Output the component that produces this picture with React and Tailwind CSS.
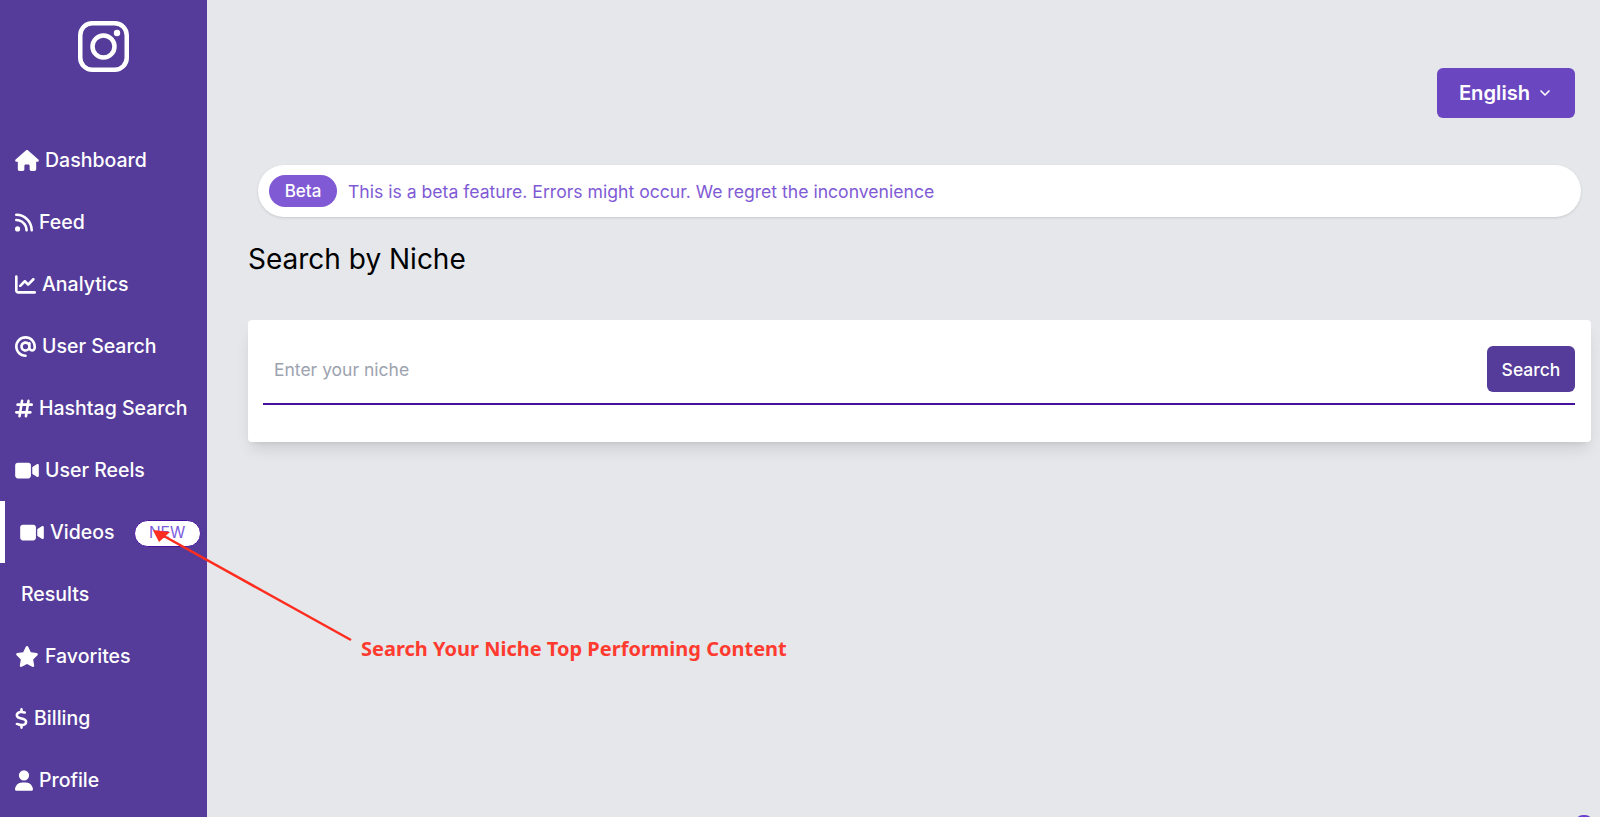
import React from "react";
import { ChevronDown } from "lucide-react";
import {
  FaHouse,
  FaRss,
  FaChartLine,
  FaAt,
  FaHashtag,
  FaVideo,
  FaStar,
  FaDollarSign,
  FaUser,
} from "react-icons/fa6";

const navItems = [
  { label: "Dashboard", icon: FaHouse, iconSize: "w-[24px]" },
  { label: "Feed", icon: FaRss, iconSize: "w-[18px]" },
  { label: "Analytics", icon: FaChartLine, iconSize: "w-[21px]" },
  { label: "User Search", icon: FaAt, iconSize: "w-[21px]" },
  { label: "Hashtag Search", icon: FaHashtag, iconSize: "w-[18px]" },
  { label: "User Reels", icon: FaVideo, iconSize: "w-[24px]" },
  { label: "Videos", icon: FaVideo, iconSize: "w-[24px]", active: true, badge: "NEW" },
  { label: "Results", plain: true },
  { label: "Favorites", icon: FaStar, iconSize: "w-[24px]" },
  { label: "Billing", icon: FaDollarSign, iconSize: "w-[13px]" },
  { label: "Profile", icon: FaUser, iconSize: "w-[18px]" },
];

function InstagramLogo() {
  return (
    <svg width="51" height="51" viewBox="0 0 51 51" fill="none" stroke="white" strokeWidth="4.5">
      <rect x="2.25" y="2.25" width="46.5" height="46.5" rx="12" />
      <circle cx="25.5" cy="25.5" r="11" />
      <circle cx="39" cy="12" r="3.2" fill="white" stroke="none" />
    </svg>
  );
}

function Sidebar() {
  return (
    <aside className="w-[207px] shrink-0 bg-[#553c9a] text-white">
      <div className="flex h-[129px] justify-center pt-[21px]">
        <div className="h-[51px]">
          <InstagramLogo />
        </div>
      </div>
      <nav>
        {navItems.map((item) => {
          const Icon = item.icon;
          return (
            <div
              key={item.label}
              className={`flex h-[62px] items-center pt-[2px] text-[19.5px] font-medium ${
                item.active ? "border-l-[5px] border-white pl-[15px]" : item.plain ? "pl-[21px]" : "pl-[15px]"
              }`}
            >
              {Icon && <Icon className={`mr-[6px] -mt-[1px] h-[21px] shrink-0 ${item.iconSize}`} />}
              <span>{item.label}</span>
              {item.badge && (
                <span className="ml-[19px] flex h-[27px] w-[67px] items-center justify-center rounded-full border border-[#44109c] bg-white text-[15.5px] font-normal text-[#7c5ce0]">
                  {item.badge}
                </span>
              )}
            </div>
          );
        })}
      </nav>
    </aside>
  );
}

export default function App() {
  return (
    <div
      className="relative flex h-[817px] overflow-hidden bg-[#e5e7eb]"
      style={{ fontFamily: "Inter, sans-serif" }}
    >
      <Sidebar />
      <main className="flex-1 pt-[68px] pr-[9px] pl-[41px]">
        <div className="flex justify-end pr-[16px]">
          <button className="flex h-[50px] w-[138px] items-center justify-center gap-[7px] rounded-md bg-[#6b46c1] text-[20.2px] font-semibold text-white">
            English
            <ChevronDown size={16} strokeWidth={2.5} />
          </button>
        </div>
        <div className="mt-[47px] mr-[10px] ml-[10px] flex h-[52px] items-center rounded-full bg-white pl-[11px] shadow">
          <span className="flex h-[32px] w-[68px] items-center justify-center rounded-full bg-[#805ad5] pt-[1px] text-[17px] font-medium text-white">
            Beta
          </span>
          <span className="mt-[2px] ml-[11px] text-[17.6px] text-[#805ad5]">
            This is a beta feature. Errors might occur. We regret the inconvenience
          </span>
        </div>
        <h1 className="mt-[22px] text-[28px] leading-[40px] text-black">Search by Niche</h1>
        <div className="mt-[41px] h-[122px] rounded bg-white pt-[26px] pr-[16px] pl-[15px] shadow-lg">
          <div className="flex h-[59px] items-start justify-between border-b-2 border-[#44109c]">
            <span className="pt-[11px] pl-[11px] text-[17.5px] text-[#9ca3af]">Enter your niche</span>
            <button className="h-[46px] w-[88px] rounded-md bg-[#553c9a] pt-[2px] text-[17.5px] font-medium text-white">
              Search
            </button>
          </div>
        </div>
      </main>

      <svg className="absolute top-0 left-0" width="1600" height="817" fill="none">
        <line x1="351" y1="640" x2="162" y2="535" stroke="#ff2d1f" strokeWidth="2.5" />
        <polygon points="153,530 170,532 159,542" fill="#ff2d1f" />
      </svg>
      <span
        className="absolute top-[634px] left-[361px] text-[20px] font-bold text-[#ff3b30]"
        style={{ fontFamily: "'Noto Sans', sans-serif" }}
      >
        Search Your Niche Top Performing Content
      </span>
      <div className="absolute -bottom-[14px] left-[1575px] h-[16px] w-[18px] rounded-full bg-[#6b3fd1]" />
    </div>
  );
}
